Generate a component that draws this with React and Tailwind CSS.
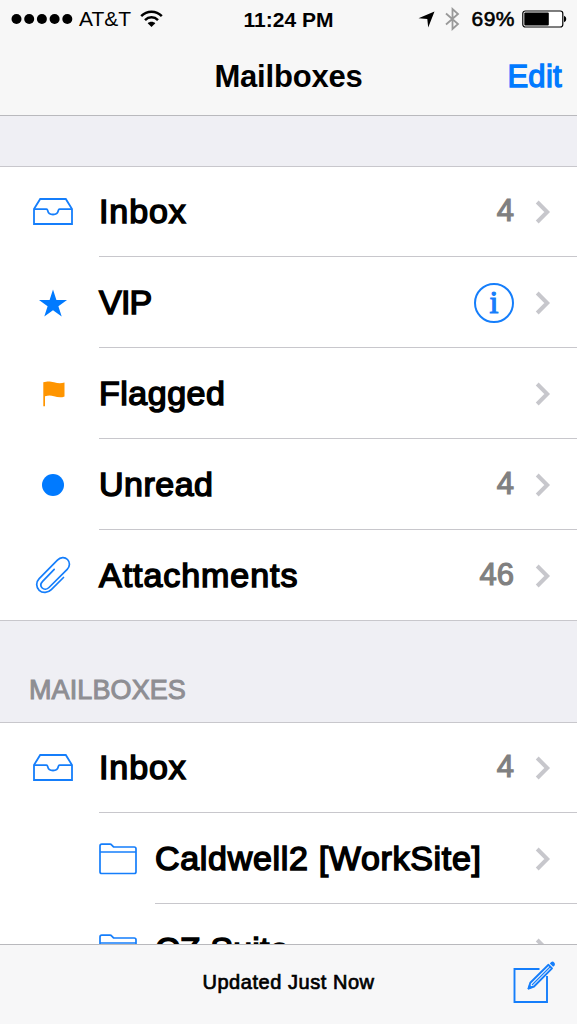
import React from "react";

const BLUE = "#157efb";

function InboxIcon() {
  return (
    <svg className="mb-[2px]" width="42" height="28" viewBox="0 0 42 28" fill="none" stroke={BLUE} strokeWidth="1.8">
      <path d="M2 12 L8.2 2 H33.8 L40 12 V27 H2 Z" />
      <path d="M2 12.2 H14.5 C15.4 12.2 15.5 12.8 15.7 13.6 C16.8 18.8 25.2 18.8 26.3 13.6 C26.5 12.8 26.6 12.2 27.5 12.2 H40" />
    </svg>
  );
}

function StarIcon() {
  return (
    <svg width="30" height="28" viewBox="0 0 30 28" fill="#007aff">
      <path d="M15 0.5 L18.4 11 H29 L20.4 17.2 L23.7 27.5 L15 21.2 L6.3 27.5 L9.6 17.2 L1 11 H11.6 Z" />
    </svg>
  );
}

function FlagIcon() {
  return (
    <svg className="ml-[2px]" width="22" height="26" viewBox="0 0 22 26" fill="#ff9500">
      <path d="M0.300 1.200 C5 0 7 0.300 11 1.300 C15 2.400 18 2.600 21.500 1.500 V15.400 C18 17 14.500 16.200 11 15.200 C8 14.400 5.500 14.300 2 15.200 V25.300 H0.300 Z" />
    </svg>
  );
}

function DotIcon() {
  return (
    <svg width="22" height="22" viewBox="0 0 22 22" fill="#007aff">
      <circle cx="11" cy="11" r="11" />
    </svg>
  );
}

function ClipIcon() {
  return (
    <svg width="36" height="38" viewBox="0 0 36 38" fill="none" stroke={BLUE} strokeWidth="1.7" strokeLinecap="round" strokeLinejoin="round">
      <path d="M28.500 21.500 L16.300 33.600 C13 37 7.500 37.400 4.200 34.300 C0.900 31.100 0.800 26.200 4.200 22.700 L22.400 4.200 C25.400 1.100 29.800 0.900 32.500 3.500 C35.200 6.100 35.100 10.300 32.200 13.300 L14 31.500 C12 33.500 9 33.800 7.200 32 C5.400 30.200 5.600 27.500 7.600 25.400 L19.200 13.400" />
    </svg>
  );
}

function FolderIcon() {
  return (
    <svg width="38" height="32" viewBox="0 0 38 32" fill="none" stroke={BLUE} strokeWidth="1.7" strokeLinejoin="round">
      <path d="M1 3 Q1 1.200 2.800 1.200 H11.200 Q12 1.200 12.600 1.900 L14 3.400 Q14.500 4 15.400 4 H35.200 Q37 4 37 5.800 V28.700 Q37 30.500 35.200 30.500 H2.800 Q1 30.500 1 28.700 Z" />
      <path d="M1 9 H37" />
    </svg>
  );
}

function Chevron() {
  return (
    <svg className="ml-[21px] mr-[26px] shrink-0" width="16" height="24" viewBox="0 0 16 24" fill="none" stroke="#c7c7cc" strokeWidth="4">
      <path d="M2.200 2 L12.200 12 L2.200 22" />
    </svg>
  );
}

function InfoBadge() {
  return (
    <span className="flex size-10 items-center justify-center rounded-full border-2 border-[#157efb] pb-[1px] font-['Liberation_Serif',serif] text-[32px] leading-[38px] text-[#157efb] [-webkit-text-stroke:1.1px_#157efb]">
      i
    </span>
  );
}

function Row({ icon, label, spacing, count, info, nested, first, last }) {
  return (
    <li className={`flex shrink-0 ${first ? "h-[90px]" : "h-[91px]"} ${last ? "border-b border-[#c8c7cc]" : ""}`}>
      <div className={`flex shrink-0 items-center justify-center ${nested ? "ml-[97px] mr-[16px] w-[42px]" : "ml-[31px] mr-6 w-11"}`}>
        {icon}
      </div>
      <div className={`flex min-w-0 flex-1 items-center ${first ? "" : "pt-px"} ${last ? "" : "border-b border-[#c8c7cc]"}`}>
        <span className={`flex-1 whitespace-nowrap pb-[2px] text-[34px] leading-10 text-black [-webkit-text-stroke:1.5px_#000] ${spacing}`}>
          {label}
        </span>
        {count && (
          <span className="pb-[1px] text-[31px] leading-10 text-[#808080] [-webkit-text-stroke:1.2px_#808080]">{count}</span>
        )}
        {info && <InfoBadge />}
        <Chevron />
      </div>
    </li>
  );
}

function StatusBar() {
  return (
    <div className="grid h-[38px] grid-cols-[230px_1fr_230px] items-center text-[21px] leading-6 text-black">
      <div className="flex items-center pl-[11px]">
        <svg width="63" height="12" viewBox="0 0 63 12">
          <circle cx="5.500" cy="6" r="5" />
          <circle cx="18.200" cy="6" r="5" />
          <circle cx="30.900" cy="6" r="5" />
          <circle cx="43.600" cy="6" r="5" />
          <circle cx="56.300" cy="6" r="5" />
        </svg>
        <span className="ml-[5px] tracking-[0px]">AT&amp;T</span>
        <svg className="ml-[9px]" width="23" height="18" viewBox="0 0 23 18" fill="none" stroke="#000" strokeWidth="2.500">
          <path d="M1.200 6.200 C7 0.300 16 0.300 21.800 6.200" />
          <path d="M5 10.200 C8.800 6.400 14.200 6.400 18 10.200" />
          <path d="M11.500 17 L7.700 13.200 C9.700 11.200 13.300 11.200 15.300 13.200 Z" fill="#000" stroke="none" />
        </svg>
      </div>
      <div className="whitespace-nowrap pt-px text-center font-bold tracking-[0px]">11:24 PM</div>
      <div className="flex items-center justify-end pr-[10px]">
        <svg width="17" height="17" viewBox="0 0 17 17">
          <path d="M16.500 0.500 L10.200 16.500 L9.300 8 L0.500 7.300 Z" />
        </svg>
        <svg className="ml-[10px]" width="15" height="24" viewBox="0 0 15 24" fill="none" stroke="#999" strokeWidth="1.800">
          <path d="M1 6.500 L13 17 L7.500 22 V2 L13 7 L1 17.500" />
        </svg>
        <span className="ml-[11px] tracking-[0.5px] [-webkit-text-stroke:0.6px_#000]">69%</span>
        <svg className="ml-[7px]" width="45" height="18" viewBox="0 0 45 18">
          <rect x="0.800" y="1" width="40" height="16" rx="2.500" fill="#fff" stroke="#000" strokeWidth="1.200" />
          <rect x="2.300" y="2.500" width="24.500" height="13" rx="1" />
          <path d="M42 5.800 Q44.300 6.500 44.300 9 Q44.300 11.500 42 12.200 Z" />
        </svg>
      </div>
    </div>
  );
}

function ComposeIcon() {
  return (
    <svg width="44" height="44" viewBox="0 0 44 44" fill="none" stroke={BLUE} strokeWidth="1.900">
      <path d="M27.500 9 H2.500 V42 H35 V16" />
      <path d="M16.500 28.500 L18.300 22.800 L36.500 4.800 L40 8.300 L22 26.500 Z" strokeLinejoin="round" fill="#f7f7f8" />
      <path d="M20 25 L38 7" strokeWidth="1.100" />
      <path d="M16 29 L17.500 25 L20 27.400 Z" fill={BLUE} strokeWidth="1" />
      <path d="M37.800 3.500 L39.200 2.100 Q40.700 0.900 42.200 2.400 Q43.700 4 42.500 5.500 L41.200 6.800 Z" fill={BLUE} stroke="none" />
    </svg>
  );
}

export default function App() {
  return (
    <div className="flex h-[1024px] w-[577px] flex-col overflow-hidden bg-[#efeff4] font-['Liberation_Sans',Arial,sans-serif]">
      <header className="h-[116px] shrink-0 border-b border-[#b9b9bd] bg-[#f7f7f7]">
        <StatusBar />
        <div className="grid h-[76px] grid-cols-[1fr_auto_1fr] items-center pt-[2px] text-[31px] leading-9">
          <h1 className="col-start-2 font-bold tracking-[-0.2px]">Mailboxes</h1>
          <button className="justify-self-end pr-[15px] tracking-[0.3px] text-[#007aff] [-webkit-text-stroke:1.3px_#007aff]">Edit</button>
        </div>
      </header>

      <main className="flex min-h-0 flex-1 flex-col overflow-hidden pt-[50px]">
        <ul className="shrink-0 border-t border-[#c8c7cc] bg-white">
          <Row first icon={<InboxIcon />} label="Inbox" spacing="tracking-[0.9px]" count="4" />
          <Row icon={<StarIcon />} label="VIP" spacing="tracking-[-0.8px]" info />
          <Row icon={<FlagIcon />} label="Flagged" spacing="tracking-[0.5px]" />
          <Row icon={<DotIcon />} label="Unread" spacing="tracking-[0.5px]" count="4" />
          <Row last icon={<ClipIcon />} label="Attachments" spacing="tracking-[0.95px]" count="46" />
        </ul>
        <h2 className="h-[101px] shrink-0 pl-[29px] pt-[53px] text-[27px] leading-8 tracking-[0.1px] text-[#8e8e93] [-webkit-text-stroke:1px_#8e8e93]">
          MAILBOXES
        </h2>
        <ul className="min-h-0 flex-1 overflow-hidden border-t border-[#c8c7cc] bg-white">
          <Row first icon={<InboxIcon />} label="Inbox" spacing="tracking-[0.9px]" count="4" />
          <Row nested icon={<FolderIcon />} label="Caldwell2 [WorkSite]" spacing="tracking-[0.68px]" />
          <Row nested icon={<FolderIcon />} label="CZ Suite" spacing="tracking-[0.2px]" />
        </ul>
      </main>

      <footer className="grid h-20 shrink-0 grid-cols-[1fr_auto_1fr] items-center border-t border-[#b9b9bd] bg-[#f7f7f8]">
        <span className="col-start-2 pb-[6px] text-[20px] leading-6 tracking-[0.55px] [-webkit-text-stroke:0.7px_#000]">
          Updated Just Now
        </span>
        <span className="justify-self-end pb-[6px] pr-[21px]">
          <ComposeIcon />
        </span>
      </footer>
    </div>
  );
}
